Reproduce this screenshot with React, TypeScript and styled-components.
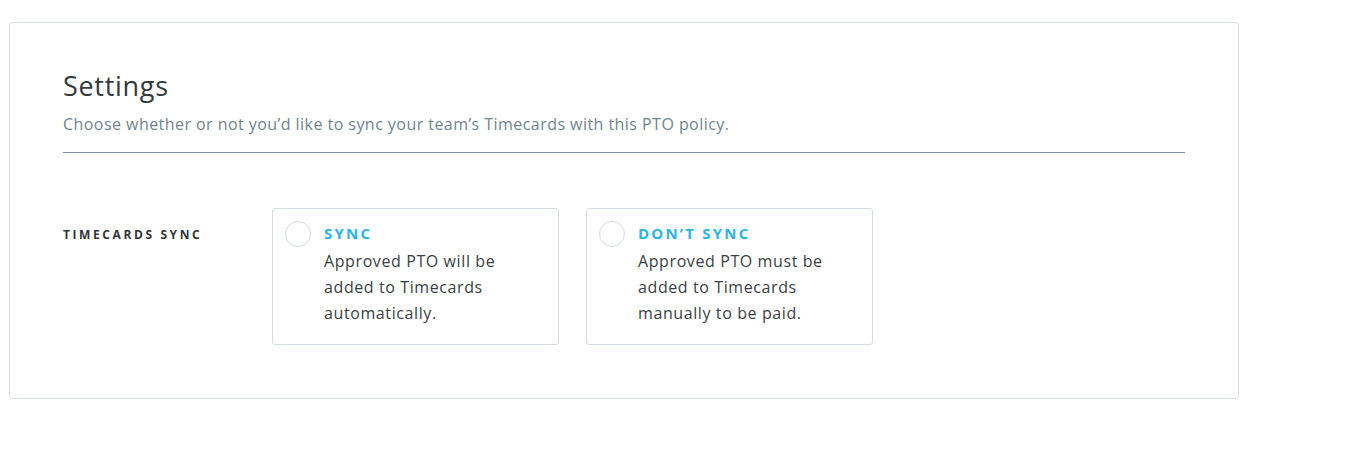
import React from "react";
import styled, { createGlobalStyle } from "styled-components";

const options = [
  {
    title: "SYNC",
    description: "Approved PTO will be added to Timecards automatically.",
  },
  {
    title: "DON’T SYNC",
    description: "Approved PTO must be added to Timecards manually to be paid.",
  },
];

const App = () => {
  return (
    <>
      <GlobalStyle />
      <Page>
        <Card>
          <Title>Settings</Title>
          <Subtitle>
            Choose whether or not you’d like to sync your team’s Timecards with
            this PTO policy.
          </Subtitle>
          <Divider />
          <Row>
            <FieldLabel>TIMECARDS SYNC</FieldLabel>
            <Options>
              {options.map((opt) => (
                <Option key={opt.title}>
                  <Radio />
                  <OptionText>
                    <OptionTitle>{opt.title}</OptionTitle>
                    <OptionDesc>{opt.description}</OptionDesc>
                  </OptionText>
                </Option>
              ))}
            </Options>
          </Row>
        </Card>
      </Page>
    </>
  );
};

export default App;

const GlobalStyle = createGlobalStyle`
  body {
    margin: 0;
    background: #fff;
    font-family: "Open Sans", "Lato", sans-serif;
    -webkit-font-smoothing: antialiased;
  }
`;

const Page = styled.div`
  padding: 22px 111px 0 9px;
`;

const Card = styled.div`
  box-sizing: border-box;
  width: 1230px;
  height: 377px;
  border: 1px solid #d9dfe3;
  border-radius: 4px;
  padding: 46px 53px 0 53px;
`;

const Title = styled.h1`
  margin: 0;
  font-weight: 400;
  font-size: 27px;
  line-height: 34px;
  letter-spacing: 0.7px;
  color: #33393e;
`;

const Subtitle = styled.p`
  margin: 10px 0 0;
  font-size: 16px;
  line-height: 22px;
  letter-spacing: 0.45px;
  color: #71848f;
`;

const Divider = styled.hr`
  margin: 17px 0 0;
  border: 0;
  height: 1px;
  background: #7d909c;
`;

const Row = styled.div`
  display: flex;
  margin-top: 55px;
`;

const FieldLabel = styled.div`
  width: 209px;
  flex-shrink: 0;
  padding-top: 18px;
  font-size: 12px;
  font-weight: 700;
  letter-spacing: 2.6px;
  color: #30353a;
`;

const Options = styled.div`
  display: flex;
  gap: 27px;
`;

const Option = styled.label`
  box-sizing: border-box;
  width: 287px;
  height: 137px;
  border: 1px solid #d6dde2;
  border-radius: 3px;
  display: flex;
  padding: 12px 12px 0 12px;
  gap: 13px;
  cursor: pointer;
`;

const Radio = styled.span`
  box-sizing: border-box;
  width: 26px;
  height: 26px;
  border-radius: 50%;
  border: 1px solid #d3dadf;
  flex-shrink: 0;
`;

const OptionText = styled.div`
  display: flex;
  flex-direction: column;
`;

const OptionTitle = styled.div`
  font-size: 15px;
  font-weight: 700;
  letter-spacing: 2.2px;
  line-height: 24px;
  color: #2bb5e6;
`;

const OptionDesc = styled.div`
  margin-top: 3px;
  font-size: 16px;
  line-height: 26px;
  letter-spacing: 0.6px;
  color: #3a3f44;
  max-width: 210px;
`;
